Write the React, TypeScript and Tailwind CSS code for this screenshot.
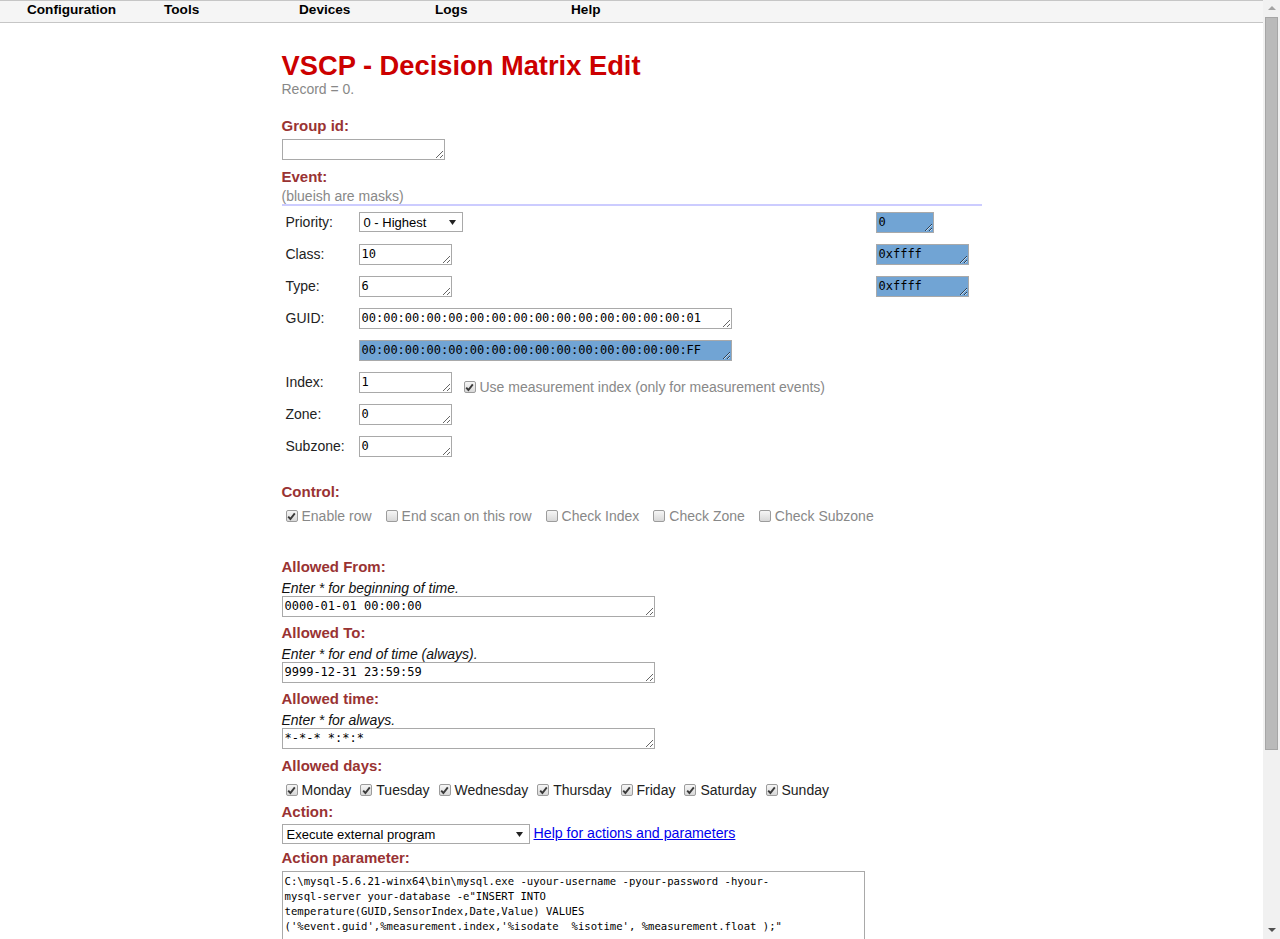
import React from "react";

function Field({ value, className }: { value: string; className: string }) {
  return (
    <textarea
      readOnly
      rows={1}
      spellCheck={false}
      defaultValue={value}
      className={`block h-[21px] resize overflow-hidden border border-[#a9a9a9] px-[2px] py-[2px] font-['DejaVu_Sans_Mono',monospace] text-[12px] leading-[15px] text-black outline-none ${className}`}
    />
  );
}

function Sel({ text, className }: { text: string; className: string }) {
  return (
    <div
      className={`flex h-[20px] items-center justify-between border border-[#a9a9a9] bg-white pl-[4px] pr-[6px] text-[13px] leading-[15px] text-black ${className}`}
    >
      <span>{text}</span>
      <svg width="7" height="5" viewBox="0 0 7 5">
        <path d="M0 0h7L3.5 5z" fill="#222" />
      </svg>
    </div>
  );
}

function Box({ checked }: { checked: boolean }) {
  return (
    <span className="ml-[4px] mr-[4px] inline-flex h-[12px] w-[12px] shrink-0 items-center justify-center rounded-[2px] border border-[#9c9c9c] bg-linear-to-b from-[#f6f6f6] to-[#d8d8d8]">
      {checked && (
        <svg width="9" height="9" viewBox="0 0 9 9">
          <path d="M1.2 4.6 L3.4 7 L7.8 1.4" stroke="#3a3a3a" strokeWidth="1.9" fill="none" />
        </svg>
      )}
    </span>
  );
}

function Check({ label, checked, gray }: { label: string; checked: boolean; gray?: boolean }) {
  return (
    <span className={`flex items-center ${gray ? "text-[#888888]" : "text-[#222222]"}`}>
      <Box checked={checked} />
      <span>{label}</span>
    </span>
  );
}

function Heading({ children, className }: { children: React.ReactNode; className: string }) {
  return <div className={`text-[15px] font-bold leading-[17px] text-[#993333] ${className}`}>{children}</div>;
}

export default function App() {
  const days = ["Monday", "Tuesday", "Wednesday", "Thursday", "Friday", "Saturday", "Sunday"];
  const navs: [string, string][] = [
    ["Configuration", "w-[137px]"],
    ["Tools", "w-[135px]"],
    ["Devices", "w-[136px]"],
    ["Logs", "w-[136px]"],
    ["Help", "w-[136px]"],
  ];
  return (
    <div className="flex h-[939px] w-[1280px] overflow-hidden bg-white font-['Liberation_Sans',Arial,sans-serif] text-[14px] text-[#222222]">
      <div className="flex min-w-0 flex-1 flex-col">
        <nav className="flex h-[23px] shrink-0 items-start border-t border-b border-[#c6c6c6] bg-[#f5f5f5] pl-[27px] pt-[1px]">
          {navs.map(([n, w]) => (
            <span key={n} className={`${w} text-[13.6px] font-bold leading-[16px] text-black`}>
              {n}
            </span>
          ))}
        </nav>

        <main className="mx-auto flex w-[700px] flex-col">
          <h1 className="mt-[27px] text-[27.3px] font-bold leading-[31px] text-[#cc0000]">VSCP - Decision Matrix Edit</h1>
          <div className="leading-[16px] text-[#888888]">Record = 0.</div>

          <Heading className="mt-[20px]">Group id:</Heading>
          <Field value="" className="mt-[5px] w-[163px]" />

          <Heading className="mt-[8px]">Event:</Heading>
          <div className="mt-[3px] leading-[16px] text-[#888888]">(blueish are masks)</div>
          <div className="h-[2px] bg-[#ccccff]" />

          <div className="grid grid-cols-[73px_517px_1fr] auto-rows-[32px] items-center pl-[4px]">
            <span>Priority:</span>
            <Sel text="0 - Highest" className="w-[104px]" />
            <Field value="0" className="w-[58px] bg-[#71a4d4]" />

            <span>Class:</span>
            <Field value="10" className="w-[93px]" />
            <Field value="0xffff" className="w-[93px] bg-[#71a4d4]" />

            <span>Type:</span>
            <Field value="6" className="w-[93px]" />
            <Field value="0xffff" className="w-[93px] bg-[#71a4d4]" />

            <span>GUID:</span>
            <Field value="00:00:00:00:00:00:00:00:00:00:00:00:00:00:00:01" className="w-[373px]" />
            <span />

            <span />
            <Field value="00:00:00:00:00:00:00:00:00:00:00:00:00:00:00:FF" className="w-[373px] bg-[#71a4d4]" />
            <span />

            <span>Index:</span>
            <div className="flex items-center">
              <Field value="1" className="w-[93px]" />
              <span className="ml-[8px] mt-[10px]">
                <Check label="Use measurement index (only for measurement events)" checked gray />
              </span>
            </div>
            <span />

            <span>Zone:</span>
            <Field value="0" className="w-[93px]" />
            <span />

            <span>Subzone:</span>
            <Field value="0" className="w-[93px]" />
            <span />
          </div>

          <Heading className="mt-[21px]">Control:</Heading>
          <div className="mt-[6px] flex h-[20px] items-center gap-[10px]">
            <Check label="Enable row" checked gray />
            <Check label="End scan on this row" checked={false} gray />
            <Check label="Check Index" checked={false} gray />
            <Check label="Check Zone" checked={false} gray />
            <Check label="Check Subzone" checked={false} gray />
          </div>

          <Heading className="mt-[32px]">Allowed From:</Heading>
          <div className="mt-[5px] italic leading-[16px] text-[#111111]">Enter * for beginning of time.</div>
          <Field value="0000-01-01 00:00:00" className="w-[373px]" />

          <Heading className="mt-[7px]">Allowed To:</Heading>
          <div className="mt-[5px] italic leading-[16px] text-[#111111]">Enter * for end of time (always).</div>
          <Field value="9999-12-31 23:59:59" className="w-[373px]" />

          <Heading className="mt-[7px]">Allowed time:</Heading>
          <div className="mt-[5px] italic leading-[16px] text-[#111111]">Enter * for always.</div>
          <Field value="*-*-* *:*:*" className="w-[373px]" />

          <Heading className="mt-[8px]">Allowed days:</Heading>
          <div className="mt-[6px] flex h-[20px] items-center gap-[5px]">
            {days.map((d) => (
              <Check key={d} label={d} checked />
            ))}
          </div>

          <Heading className="mt-[3px]">Action:</Heading>
          <div className="mt-[4px] flex h-[20px] items-center">
            <Sel text="Execute external program" className="w-[248px]" />
            <a href="#" className="ml-[4px] text-[14.2px] text-[#0000ee] underline">
              Help for actions and parameters
            </a>
          </div>

          <Heading className="mt-[5px]">Action parameter:</Heading>
          <div className="mt-[5px] h-[120px] w-[583px] shrink-0 whitespace-pre border border-[#a9a9a9] px-[2px] pt-[2px] font-['DejaVu_Sans_Mono',monospace] text-[10.6px] leading-[15px] text-black">
            {"C:\\mysql-5.6.21-winx64\\bin\\mysql.exe -uyour-username -pyour-password -hyour-\nmysql-server your-database -e\"INSERT INTO\ntemperature(GUID,SensorIndex,Date,Value) VALUES\n('%event.guid',%measurement.index,'%isodate  %isotime', %measurement.float );\""}
          </div>
        </main>
      </div>

      <div className="flex w-[17px] shrink-0 flex-col items-center bg-[#f1f1f1]">
        <svg className="mt-[6px]" width="8" height="4" viewBox="0 0 8 4">
          <path d="M0 4L4 0L8 4z" fill="#a3a3a3" />
        </svg>
        <div className="mt-[7px] h-[733px] w-[13px] border border-[#a6a6a6] bg-[#bababa]" />
        <div className="flex-1" />
        <svg className="mb-[7px]" width="8" height="4" viewBox="0 0 8 4">
          <path d="M0 0L8 0L4 4z" fill="#505050" />
        </svg>
      </div>
    </div>
  );
}
